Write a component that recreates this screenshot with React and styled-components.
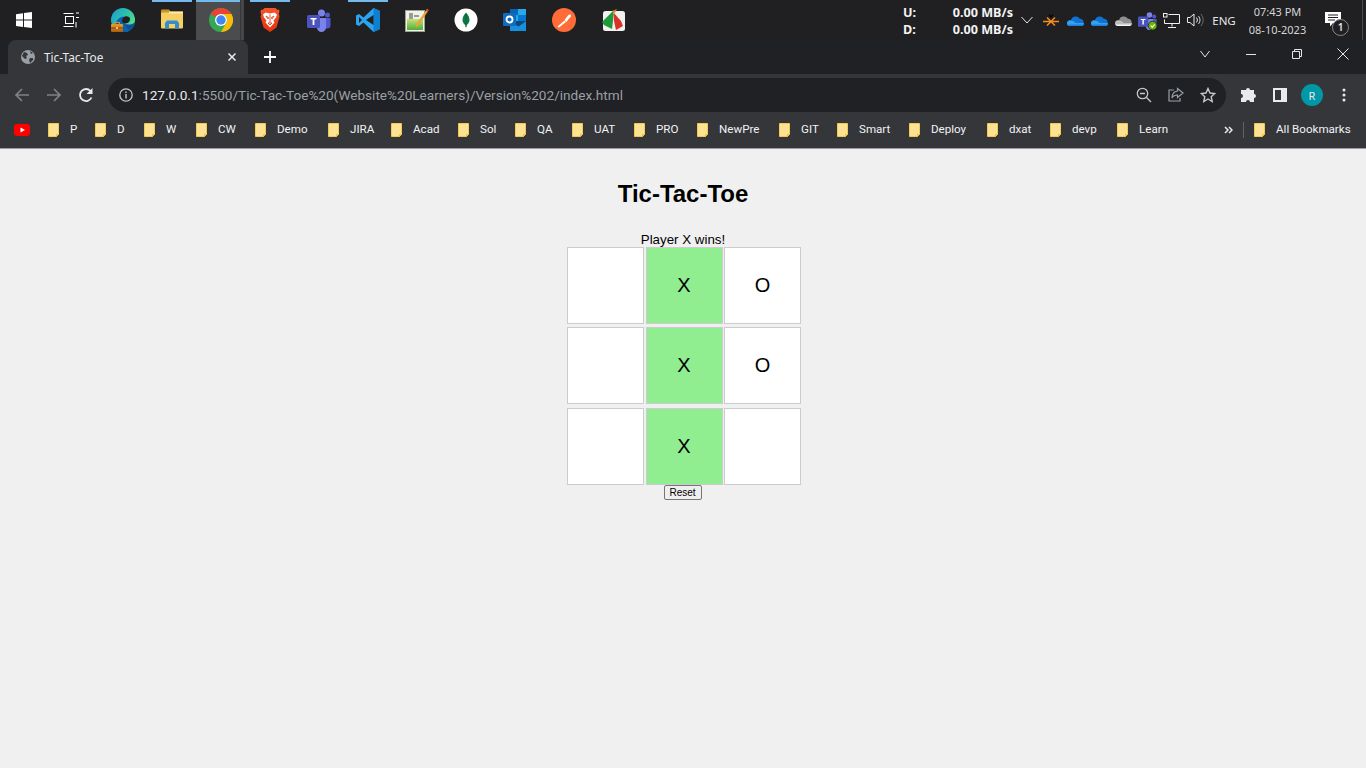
import React from "react";
import styled, { createGlobalStyle } from "styled-components";

const Global = createGlobalStyle`
  html, body { margin: 0; padding: 0; height: 100%; background: #f0f0f0; }
  #root { min-height: 100vh; display: flex; flex-direction: column; }
`;
const uiFont = `"Noto Sans", "Open Sans", sans-serif`;
const thinFont = `Roboto, "Noto Sans", sans-serif`;
const Shell = styled.div`display:flex;flex-direction:column;height:768px;overflow:hidden;font-family:${uiFont};`;

const Taskbar = styled.div`display:flex;align-items:stretch;height:40px;background:#202022;flex:none;`;
const TaskItem = styled.div`
  position:relative;flex:none;width:${p=>p.$w||49}px;height:40px;box-sizing:border-box;
  padding-right:${p=>p.$pr||0}px;display:flex;align-items:center;justify-content:center;
  ${p=>p.$active?`background:linear-gradient(90deg,#4b4c4e 0,#4b4c4e 44px,#36373a 44px,#36373a 45px,#45464a 45px,#45464a 48px,transparent 48px);`:""}
  ${p=>p.$open?`&::before{content:"";position:absolute;top:0;left:${p.$active?0:4.5}px;width:${p.$active?44:40}px;height:2px;background:#76b9ed;}`:""}
`;
const Tray = styled.div`display:flex;align-items:center;margin-left:auto;flex:none;height:40px;`;
const NetSpeed = styled.div`width:110px;margin-right:2px;display:grid;grid-template-columns:1fr auto;color:#f3f3f3;font-size:12.6px;font-weight:700;line-height:17px;padding-top:1px;`;
const TrayCell = styled.div`flex:none;width:${p=>p.$w||24}px;height:40px;display:flex;align-items:center;justify-content:center;color:#e8e8e8;font-size:${p=>p.$fs||11.5}px;`;
const Clock = styled.div`flex:none;width:72px;padding-left:1px;box-sizing:border-box;text-align:center;color:#d6d6d6;font-size:11px;line-height:18px;margin-top:1px;`;
const Notif = styled.div`position:relative;flex:none;width:40px;height:40px;display:flex;align-items:center;justify-content:center;`;
const NotifBadge = styled.span`position:absolute;left:19px;top:19px;width:15px;height:15px;border:1px solid #8a8a8a;border-radius:50%;background:#202022;color:#e8e8e8;font-size:10px;font-weight:600;line-height:15px;text-align:center;`;
const TraySep = styled.div`width:1px;height:40px;background:#4a4b4d;margin:0 3px 0 9px;flex:none;`;

const TabStrip = styled.div`display:flex;align-items:flex-end;height:34px;background:#202124;padding-left:8px;flex:none;`;
const Tab = styled.div`width:240px;height:34px;box-sizing:border-box;background:#35363a;border-radius:8px 8px 0 0;display:flex;align-items:center;padding:0 11px 0 13px;color:#e8eaed;font-size:11.8px;flex:none;`;
const TabTitle = styled.span`margin-left:9px;flex:1;padding-bottom:1px;`;
const NewTab = styled.div`width:44px;height:34px;display:flex;align-items:center;justify-content:center;flex:none;`;
const WinControls = styled.div`display:flex;margin-left:auto;height:34px;align-self:flex-start;`;
const WinBtn = styled.div`width:46px;height:28px;display:flex;align-items:center;justify-content:center;`;

const Toolbar = styled.div`display:flex;align-items:flex-end;height:38px;background:#35363a;padding:0 6px;flex:none;`;
const ToolBtn = styled.div`width:32px;height:34px;display:flex;align-items:center;justify-content:center;flex:none;`;
const Pill = styled.div`flex:1;height:34px;margin:0 6px;background:#202124;border-radius:17px;display:flex;align-items:center;padding:0 2px 0 11px;min-width:0;`;
const Url = styled.div`flex:1;margin-left:9px;font-family:${thinFont};font-size:13.6px;color:#9aa0a6;white-space:nowrap;`;
const UrlHost = styled.span`color:#e8eaed;`;
const Avatar = styled.div`width:22px;height:22px;border-radius:50%;background:#0097a7;color:#e8eaed;font-size:11px;display:flex;align-items:center;justify-content:center;`;

const Bookmarks = styled.div`display:flex;align-items:center;height:36px;background:#35363a;border-bottom:1px solid #9b9c9e;padding-left:14px;flex:none;color:#f1f3f4;font-family:${thinFont};font-size:11.6px;`;
const YT = styled.div`width:34px;flex:none;display:flex;`;
const Mark = styled.div`display:flex;align-items:center;width:${p=>p.$w}px;flex:none;gap:11px;white-space:nowrap;`;
const MarkLabel = styled.span`padding-bottom:2px;`;
const More = styled.div`margin-left:auto;width:15px;display:flex;flex:none;`;
const MarkSep = styled.div`width:1px;height:16px;background:#5f6368;margin:0 10px 0 4px;flex:none;`;
const AllMarks = styled(Mark)`margin-right:14px;`;

const Page = styled.main`flex:1;background:#f0f0f0;display:flex;flex-direction:column;align-items:center;font-family:"Liberation Sans",Arial,sans-serif;color:#000;`;
const Title = styled.h1`font-size:24px;font-weight:700;margin:31px 0 0;line-height:27px;`;
const Status = styled.div`font-size:13.33px;line-height:14px;margin-top:26px;`;
const Board = styled.div`display:grid;grid-template-columns:79px 78px 77px;grid-template-rows:80px 81px 77px;margin-left:1px;`;
const Cell = styled.div`
  width:77px;height:77px;box-sizing:border-box;border:1px solid #ccc;background:${p=>p.$win?"#90ee90":"#fff"};
  display:flex;align-items:center;justify-content:center;font-size:20px;
  &:nth-child(3n){padding-left:1px;}
`;
const Reset = styled.button`font:10px "Liberation Sans",Arial,sans-serif;height:15px;width:38px;padding:0;background:#efefef;border:1px solid #767676;border-radius:2px;color:#000;margin-left:-1px;`;

const Svg = ({s=24,h,vb,children,...r})=>(<svg width={s} height={h||s} viewBox={vb||`0 0 ${s} ${h||s}`} fill="none" {...r}>{children}</svg>);

const WinLogo=()=>(<Svg s={16}><path d="M0 2.200 7 1.200V7.600H0ZM8 1.100 16 0V7.600H8ZM0 8.600H7V15L0 14ZM8 8.600H16V16L8 14.900Z" fill="#fff"/></Svg>);
const TaskView=()=>(<Svg s={16}><g stroke="#fff" strokeWidth="1"><path d="M.5 1.500h10M.5 14.500h10"/><rect x="2.500" y="4.500" width="8" height="7"/><path d="M13 1h3M13 5.500h3M13 10v5.500"/></g></Svg>);
const Edge=()=>(<Svg s={24}><defs>
  <linearGradient id="eg" x1="0" y1="0" x2="1" y2=".7"><stop offset="0" stopColor="#1b9bd8"/><stop offset=".55" stopColor="#2bc3a8"/><stop offset="1" stopColor="#5fe38a"/></linearGradient>
  <linearGradient id="eb" x1="0" y1="0" x2="0" y2="1"><stop offset="0" stopColor="#f0a030"/><stop offset="1" stopColor="#a85c10"/></linearGradient></defs>
  <circle cx="12" cy="12" r="12" fill="url(#eg)"/>
  <path d="M5 15a8 8 0 0 0 13 8 12 12 0 0 0 6-9c-2 2.500-6 3-9 2-3-1-3-5-1-7-4-1-8 2-9 6Z" fill="#0b62ad"/>
  <path d="M11 13c0-4 4-6 7-4 2 1.500 1 5-1.500 6-2 .800-5.500.500-5.500-2Z" fill="#202022"/>
  <path d="M24 14c-1 3-3 6-6 8l-4-5c4 1 8 .500 10-3Z" fill="#0b4f96"/>
  <rect x="0" y="16" width="12" height="8" rx="1" fill="url(#eb)"/>
  <rect x="3.500" y="14.500" width="5" height="2.500" stroke="#e08a26"/><path d="M0 20h12" stroke="#7a430c"/><rect x="5" y="19" width="2" height="2" fill="#f4c46a"/>
</Svg>);
const Explorer=()=>(<Svg s={22}><path d="M0 1.500a1 1 0 0 1 1-1h7l1.500 2H21a1 1 0 0 1 1 1V7H0Z" fill="#c99522"/><rect y="3.500" width="22" height="16" rx="1" fill="#f5cf63"/><rect x="8" y="2.500" width="14" height="2" fill="#fde9a8"/><path d="M4 19.500V14l2-2.500h10l2 2.500v5.500h-4V15H8v4.500Z" fill="#2f8fd0"/></Svg>);
const Chrome=()=>(<Svg s={24}><circle cx="12" cy="12" r="12" fill="#34a853"/><path d="M12 0a12 12 0 0 1 10.400 6H12a6 6 0 0 0-5.200 3L1.600 6A12 12 0 0 1 12 0Z" fill="#ea4335"/><path d="M22.400 6A12 12 0 0 1 12 24l5.200-9A6 6 0 0 0 17.200 9 6 6 0 0 0 12 6Z" fill="#fbbc05"/><circle cx="12" cy="12" r="6" fill="#fff"/><circle cx="12" cy="12" r="4.700" fill="#4285f4"/></Svg>);
const Brave=()=>(<Svg s={20} h={24}><defs><linearGradient id="br" x1="0" y1="0" x2="0" y2="1"><stop offset="0" stopColor="#f4552a"/><stop offset="1" stopColor="#e8320f"/></linearGradient></defs>
  <path d="M4.500 0h11l2 2 1.500-.5.500 2-.7 2 .7 3-3 11L10 24l-6.500-4.500-3-11 .7-2-.7-2L1 1.500 2.500 2Z" fill="url(#br)"/>
  <path d="M5.500 4.500 10 5.500l4.500-1 2.500 2-1 3-2.500 3 1 2L10 19.500 5.500 14.500l1-2-2.500-3-1-3Z" fill="#fff"/>
  <path d="M6 8l2.500 1.500L8 11ZM14 8l-2.500 1.500.5 1.500ZM8 15h4l-2 2ZM10 6.500v8" stroke="#e8401a" strokeWidth=".9"/>
</Svg>);
const TeamsArt=()=>(<><circle cx="14.500" cy="5" r="3.500" fill="#7b83eb"/><circle cx="20.500" cy="7" r="2.500" fill="#5059c9"/><path d="M16 10h7.500v7a3.500 3.500 0 0 1-7 0Z" fill="#5059c9"/><path d="M8 10h11v9a4.500 4.500 0 0 1-9 1Z" fill="#7b83eb"/><rect x="0" y="7" width="13" height="13" rx="1.500" fill="#4b53bc"/><path d="M3.500 10h6v1.500H7.400V17H5.600v-5.500H3.500Z" fill="#fff"/></>);
const Teams=()=>(<Svg s={24}><TeamsArt/></Svg>);
const TrayTeams=()=>(<Svg s={19} vb="0 0 24 24"><TeamsArt/><circle cx="18.500" cy="18.500" r="5.500" fill="#6bb700" stroke="#202022"/><path d="M16 18.500l2 2 3-3.500" stroke="#fff" strokeWidth="1.300"/></Svg>);
const VSCode=()=>(<Svg s={24}><path d="M17.500 0 24 3v18l-6.500 3L7.500 14.500 3 18l-3-1.500V7.500L3 6l4.500 3.500Z" fill="#2aa3f0"/><path d="M17.500 0 24 3v18l-6.500 3Z" fill="#0f7fcf"/><path d="M17.500 7 10 12l7.500 5Z" fill="#202022"/><path d="M3 9v6l3-3Z" fill="#202022"/></Svg>);
const NoteApp=()=>(<Svg s={24}><rect x=".5" y="2.500" width="19" height="21" fill="#eef2e8" stroke="#9aa092"/><defs><linearGradient id="ng" x1="0" y1="0" x2="0" y2="1"><stop offset="0" stopColor="#c8e07a"/><stop offset="1" stopColor="#4fae3a"/></linearGradient></defs><rect x="2" y="11" width="16" height="11" fill="url(#ng)"/><path d="M5 5v6M7 5v6M9 8h5" stroke="#444" strokeWidth="1"/><path d="M22 1 23.500 2.500 13 18l-2.500 1.500.5-3Z" fill="#e8a72c"/><path d="M22 .500 23.800 2 22.500 4 20.800 2.500Z" fill="#c8492a"/></Svg>);
const Mongo=()=>(<Svg s={24}><circle cx="12" cy="12" r="11.500" fill="#fff"/><path d="M12 4.500c2.500 2.500 3.500 5 3.500 7.500s-1.500 4-2.800 5l-.4 2.500h-.6l-.4-2.500C10 16 8.500 14.500 8.500 12s1-5 3.500-7.500Z" fill="#0f7a45"/><path d="M12 6v13" stroke="#0a5730" strokeWidth=".6"/></Svg>);
const Outlook=()=>(<Svg s={24}><rect x="7" y="1" width="16" height="12" fill="#0f6cbd"/><rect x="15" y="1" width="8" height="6" fill="#28a8ea"/><rect x="7" y="1" width="8" height="6" fill="#0364b8"/><rect x="7" y="7" width="8" height="6" fill="#28a8ea"/><rect x="15" y="7" width="8" height="6" fill="#0078d4"/><path d="M7 13h16l-7.500 5.500Z" fill="#14447d"/><path d="M7 13v10h16V13l-7.500 5.500Z" fill="#1490df"/><rect x="0" y="5" width="13" height="13" rx="1" fill="#0f6cbd"/><circle cx="6.500" cy="11.500" r="3" stroke="#fff" strokeWidth="1.800"/></Svg>);
const Postman=()=>(<Svg s={24}><circle cx="12" cy="12" r="12" fill="#ff6c37"/><path d="M5.500 18.500 12.500 12.500l1.500 1.500L7 19.500Z" fill="#fff"/><path d="M12.500 12l3.500-4.500c1-1.200 2.800-1.500 3 .2.100 1-.9 1.500-2 2.800L14.500 14Z" fill="#fff"/></Svg>);
const Foxit=()=>(<Svg s={24}><rect x="2" y="3" width="22" height="20" rx="2.500" fill="#f1f1ee"/><path d="M12 3 1 14l2 3 8 4 1-8Z" fill="#1f9a3a"/><path d="M12 4l8 9 2 5-7 4-2-9Z" fill="#d8322a"/><path d="M11 3l5-2-2 3.500Z" fill="#e07b1e"/><path d="M12 3l2 1.500-1.500 2Z" fill="#86b92c"/></Svg>);

const Chevron=({s=14})=>(<Svg s={s} h={10}><path d={`M1.500 2 ${s/2} 8 ${s-1.500} 2`} stroke="#e4e4e4" strokeWidth="1"/></Svg>);
const Spider=()=>(<Svg s={16} h={12}><path d="M0 7.500h16M4 3.500l4 4-4 4M12 3.500l-4 4 4 4" stroke="#f58a1f" strokeWidth="1.500"/><path d="M6 .500l2 2.500 2-2.500" stroke="#000" strokeWidth="1.200"/></Svg>);
const Cloud=({a="#1272cf",b="#33a0f2",c="#1b80dc"})=>(<Svg s={17} h={11}><path d="M4 5.500a4.800 4.800 0 0 1 8.800-1.800A3.500 3.500 0 0 1 16.500 8L17 8.500c0 1.300-1 2.500-2.500 2.500H3a3 3 0 0 1-3-3 3 3 0 0 1 4-2.500Z" fill={a}/><path d="M4 5.500c2 0 3.500 1 4.500 2.500h8.300c.2 1.700-1 3-2.300 3H3a3 3 0 0 1-3-3 3 3 0 0 1 4-2.500Z" fill={b}/><path d="M.5 9.500 16 9.500c-.3.900-1 1.500-1.500 1.500H3a3 3 0 0 1-2.500-1.500Z" fill={c}/></Svg>);
const Net=()=>(<Svg s={17} h={15}><g stroke="#f0f0f0"><path d="M5.500 1.500H16.500V10.500H1.500V6.500"/><path d="M9 10.500V13.500M5 14.500H13"/><rect x=".5" y=".5" width="3.500" height="3.500"/></g></Svg>);
const Speaker=()=>(<Svg s={17} h={14}><g stroke="#eaeaea"><path d="M.5 4.500h2.500L7 1v12L3 9.500H.5Z"/><path d="M9.500 4.500a4 4 0 0 1 0 5"/><path d="M11.500 3a6.500 6.500 0 0 1 0 8" stroke="#cfcfcf"/><path d="M14 1a10 10 0 0 1 0 12" stroke="#666"/></g></Svg>);
const Chat=()=>(<Svg s={17} h={16}><path d="M0 0h16v11H8l-3 3.500V11H0Z" fill="#fff"/><path d="M3 3h10M3 5.500h10M3 8h7" stroke="#202022"/></Svg>);
const Globe=()=>(<Svg s={14}><circle cx="7" cy="7" r="7" fill="#9aa0a6"/><path d="M3 2 6 3 7 5 5 6 6 8 4 9 1 6ZM9 8l3 0 0 2-3 3-1-3ZM9 1l3 2-2 1Z" fill="#35363a"/></Svg>);
const Xmark=()=>(<Svg s={10}><path d="M1.500 1.500 8.500 8.500M8.500 1.500 1.500 8.500" stroke="#e8eaed" strokeWidth="1.500"/></Svg>);
const Plus=()=>(<Svg s={12}><path d="M6 0v12M0 6h12" stroke="#fff" strokeWidth="1.800"/></Svg>);
const WMin=()=>(<Svg s={10}><path d="M0 5.500h10" stroke="#e4e4e4"/></Svg>);
const WMax=()=>(<Svg s={10}><path d="M.5 2.500h7v7h-7ZM2.500 2.500v-2h7v7h-2" stroke="#e4e4e4"/></Svg>);
const WClose=()=>(<Svg s={12}><path d="M.5.500l11 11M11.500.500l-11 11" stroke="#e4e4e4"/></Svg>);
const Arrow=({back,color})=>(<Svg s={16} style={back?{}:{transform:"scaleX(-1)"}}><path d="M15 8H2M8 2 2 8l6 6" stroke={color} strokeWidth="1.700"/></Svg>);
const Reload=()=>(<Svg s={16}><path d="M13.500 10.500A6 6 0 1 1 12.500 4" stroke="#e8eaed" strokeWidth="1.800"/><path d="M14.500 1v6h-6Z" fill="#e8eaed"/></Svg>);
const Info=()=>(<Svg s={14}><circle cx="7" cy="7" r="6.200" stroke="#c4c7c9" strokeWidth="1.300"/><path d="M7 6v4.500M7 3.500v1.500" stroke="#c4c7c9" strokeWidth="1.400"/></Svg>);
const ZoomOut=()=>(<Svg s={16}><circle cx="6.500" cy="6.500" r="5.200" stroke="#c4c7c9" strokeWidth="1.300"/><path d="M4 6.500h5M10.500 10.500l4.500 4.500" stroke="#c4c7c9" strokeWidth="1.400"/></Svg>);
const Share=()=>(<Svg s={16}><path d="M6 3H1v11h11v-3" stroke="#9aa0a6" strokeWidth="1.200"/><path d="M9.500 1.500 15 6l-5.500 4.500V8C7 8 5 9 4 11c0-4 2-6.500 5.500-7Z" stroke="#9aa0a6" strokeWidth="1.200"/></Svg>);
const Star=()=>(<Svg s={16}><path d="M8 1.500l2 4.500 4.800.5-3.600 3.200 1 4.800L8 12l-4.200 2.500 1-4.800L1.200 6.500 6 6Z" stroke="#c4c7c9" strokeWidth="1.400"/></Svg>);
const Puzzle=()=>(<Svg s={16}><path d="M6 3a2 2 0 0 1 4 0h4v4a2 2 0 0 1 0 4v4H10a2 2 0 0 0-4 0H1v-4a2 2 0 0 0 0-4V3Z" fill="#e8eaed"/></Svg>);
const Panel=()=>(<Svg s={14}><rect width="14" height="14" fill="#e8eaed"/><rect x="2" y="2" width="6" height="10" fill="#35363a"/></Svg>);
const Kebab=()=>(<Svg s={4} h={14}><g fill="#e8eaed"><circle cx="2" cy="2" r="1.500"/><circle cx="2" cy="7" r="1.500"/><circle cx="2" cy="12" r="1.500"/></g></Svg>);
const YouTube=()=>(<Svg s={16} h={12}><rect width="16" height="12" rx="3" fill="#f00"/><path d="M6.500 3.500 11 6l-4.500 2.500Z" fill="#fff"/></Svg>);
const Folder=()=>(<Svg s={11} h={14} style={{flex:"none"}}><path d="M.5.500h10v11l-2 2h-8Z" fill="#fde293" stroke="#f3c94f"/><path d="M8.500 13.500v-2h2" fill="#e8c24a" stroke="#e8c24a"/></Svg>);
const Dbl=()=>(<Svg s={9} h={8}><path d="M1 1l3 3-3 3M5 1l3 3-3 3" stroke="#e8eaed" strokeWidth="1.500"/></Svg>);

const apps=[
  {I:WinLogo,w:48},{I:TaskView,w:50,pr:4},{I:Edge},{I:Explorer,open:1},{I:Chrome,open:1,active:1},
  {I:Brave,open:1},{I:Teams},{I:VSCode,open:1},{I:NoteApp},{I:Mongo},{I:Outlook},{I:Postman},{I:Foxit},
];
const marks=[["P",47],["D",49],["W",52],["CW",59],["Demo",73],["JIRA",63],["Acad",67],["Sol",57],["QA",57],["UAT",62],["PRO",63],["NewPre",82],["GIT",58],["Smart",72],["Deploy",78],["dxat",63],["devp",67],["Learn",60]];
const rows=[["", "X", "O"],["", "X", "O"],["", "X", ""]];

export default function App(){
  return (<>
    <Global/>
    <Shell>
      <Taskbar>
        {apps.map(({I,w,pr,open,active},i)=>(<TaskItem key={i} $w={w} $pr={pr} $open={open} $active={active}><I/></TaskItem>))}
        <Tray>
          <NetSpeed><span>U:</span><span>0.00 MB/s</span><span>D:</span><span>0.00 MB/s</span></NetSpeed>
          <TrayCell><Chevron/></TrayCell>
          <TrayCell><Spider/></TrayCell>
          <TrayCell><Cloud/></TrayCell>
          <TrayCell><Cloud/></TrayCell>
          <TrayCell><Cloud a="#8f8f8f" b="#bdbdbd" c="#f4f4f4"/></TrayCell>
          <TrayCell><TrayTeams/></TrayCell>
          <TrayCell><Net/></TrayCell>
          <TrayCell><Speaker/></TrayCell>
          <TrayCell $w={34}>ENG</TrayCell>
          <Clock><div>07:43 PM</div><div>08-10-2023</div></Clock>
          <Notif><Chat/><NotifBadge>1</NotifBadge></Notif>
          <TraySep/>
        </Tray>
      </Taskbar>
      <TabStrip>
        <Tab><Globe/><TabTitle>Tic-Tac-Toe</TabTitle><Xmark/></Tab>
        <NewTab><Plus/></NewTab>
        <WinControls>
          <WinBtn><Chevron s={12}/></WinBtn>
          <WinBtn><WMin/></WinBtn>
          <WinBtn><WMax/></WinBtn>
          <WinBtn><WClose/></WinBtn>
        </WinControls>
      </TabStrip>
      <Toolbar>
        <ToolBtn><Arrow back color="#7f8285"/></ToolBtn>
        <ToolBtn><Arrow color="#7f8285"/></ToolBtn>
        <ToolBtn><Reload/></ToolBtn>
        <Pill>
          <Info/>
          <Url><UrlHost>127.0.0.1</UrlHost>:5500/Tic-Tac-Toe%20(Website%20Learners)/Version%202/index.html</Url>
          <ToolBtn><ZoomOut/></ToolBtn>
          <ToolBtn><Share/></ToolBtn>
          <ToolBtn><Star/></ToolBtn>
        </Pill>
        <ToolBtn><Puzzle/></ToolBtn>
        <ToolBtn><Panel/></ToolBtn>
        <ToolBtn><Avatar>R</Avatar></ToolBtn>
        <ToolBtn><Kebab/></ToolBtn>
      </Toolbar>
      <Bookmarks>
        <YT><YouTube/></YT>
        {marks.map(([t,w])=>(<Mark key={t} $w={w}><Folder/><MarkLabel>{t}</MarkLabel></Mark>))}
        <More><Dbl/></More>
        <MarkSep/>
        <AllMarks $w={98}><Folder/><MarkLabel>All Bookmarks</MarkLabel></AllMarks>
      </Bookmarks>
      <Page>
        <Title>Tic-Tac-Toe</Title>
        <Status>Player X wins!</Status>
        <Board>
          {rows.flat().map((v,i)=>(<Cell key={i} $win={v==="X"}>{v}</Cell>))}
        </Board>
        <Reset>Reset</Reset>
      </Page>
    </Shell>
  </>);
}
